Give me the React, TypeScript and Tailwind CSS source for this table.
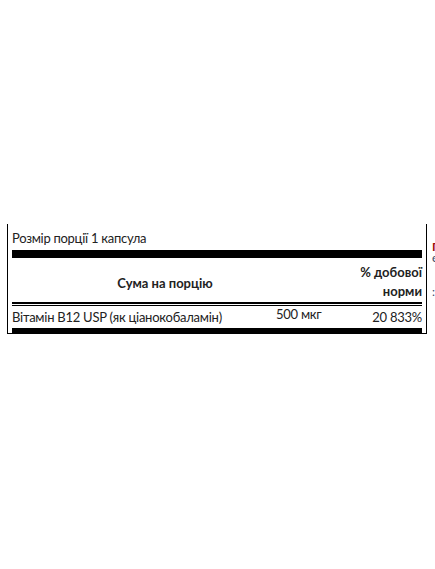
import React from "react";

export default function App() {
  const font = { fontFamily: "Lato, 'Noto Sans', sans-serif" };
  return (
    <div
      className="w-[435px] h-[569px] overflow-hidden bg-white flex items-start pt-[224px] pl-[7px] text-[13px] text-[#222]"
      style={font}
    >
      <div className="w-[420px] h-[110px] shrink-0 border-l border-r border-b border-black px-[4px] overflow-hidden">
        <div className="pt-[5px] leading-[18px] tracking-[-0.28px]">Розмір порції 1 капсула</div>
        <div className="mt-[3px] h-[8px] bg-black" />
        <div className="flex h-[44px]">
          <div className="w-[306px] text-center font-bold pt-[16px] leading-[18px]">
            Сума на порцію
          </div>
          <div className="flex-1 text-right font-bold pt-[5px] leading-[19px]">
            <div>% добової</div>
            <div>норми</div>
          </div>
        </div>
        <div className="h-[2px] bg-black" />
        <div className="mt-[1px] h-px bg-black" />
        <div className="flex h-[22px] tracking-[-0.25px]">
          <div className="w-[264px] pt-[2px] leading-[18px] whitespace-nowrap">
            Вітамін B12 USP (як ціанокобаламін)
          </div>
          <div className="w-[60px] leading-[16px] whitespace-nowrap">500 мкг</div>
          <div className="flex-1 text-right pt-[2px] leading-[18px]">20 833%</div>
        </div>
        <div className="h-[8px] bg-black" />
      </div>
      <div className="ml-[5px] shrink-0 whitespace-nowrap text-[12px]">
        <div className="mt-[17px] h-[12px] leading-[12px] font-bold text-[#9e0b0b]">Попередження</div>
        <div className="h-[10px] leading-[10px] text-[#3a4a6a]">є</div>
        <div className="mt-[22px] leading-[14px] text-[#3a4a6a]">:</div>
      </div>
    </div>
  );
}
